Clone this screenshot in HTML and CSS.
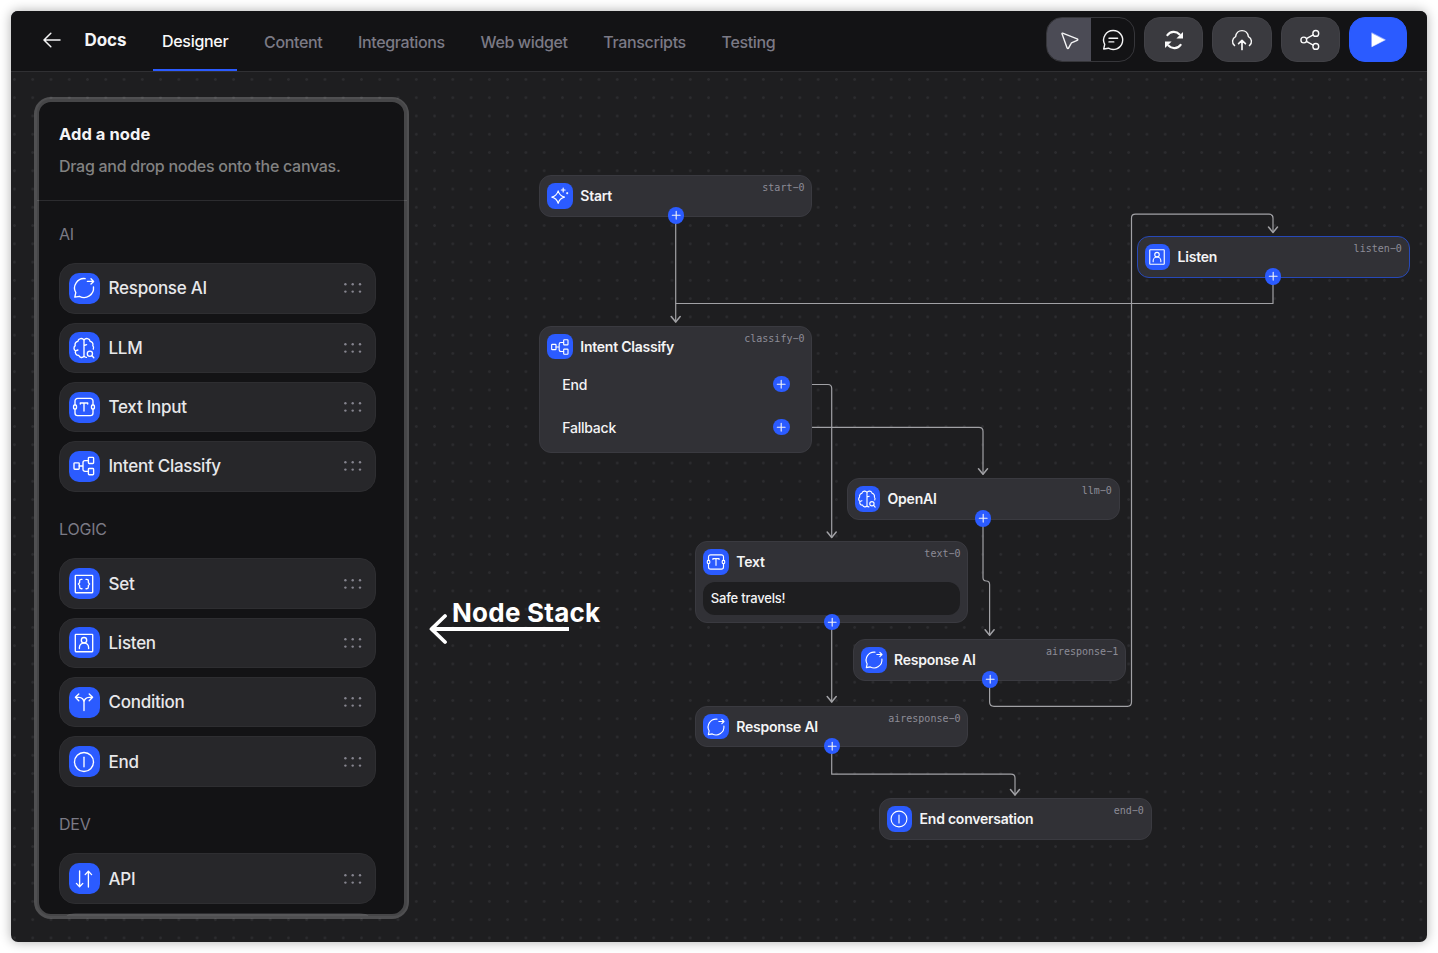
FILE: index.html
```html
<!DOCTYPE html>
<html lang="en">
<head>
<meta charset="utf-8">
<title>Docs – Designer</title>
<link rel="stylesheet" href="styles.css">
</head>
<body>
<svg class="sprite" aria-hidden="true">
  <symbol id="i-response" viewBox="0 0 24 24"><path d="M13.2 2.6A9.5 9.5 0 0 0 3.8 16.7L2.8 21.2L7.5 20.3A9.5 9.5 0 0 0 21.5 11"/><path d="M15.4 5.4h6M19 2.8l2.6 2.6-2.6 2.6"/></symbol>
  <symbol id="i-llm" viewBox="0 0 24 24"><path d="M12 4.300v15.900a2.900 2.900 0 0 1-5.200-.8 3.200 3.200 0 0 1-3.200-4.500 3.200 3.200 0 0 1-.4-5.300 3.300 3.300 0 0 1 2.600-4.300A3.300 3.300 0 0 1 12 4.300a3.300 3.300 0 0 1 6.200 1A3.300 3.300 0 0 1 20.800 9.600a3.200 3.200 0 0 1 .5 3.500M12 20.200a2.800 2.800 0 0 0 2.400 1.200M3.600 14.900l2.300-.9M12 9.500l2.600-.8"/><circle cx="17.900" cy="17.700" r="2.600"/><path d="M20 19.700l1.800 2"/></symbol>
  <symbol id="i-text" viewBox="0 0 24 24"><path d="M3 9.800V6a2.600 2.600 0 0 1 2.600-2.600h12.800A2.600 2.600 0 0 1 21 6v3.800M21 14.200V18a2.600 2.600 0 0 1-2.600 2.600H5.600A2.600 2.600 0 0 1 3 18v-3.800"/><rect x="1.600" y="10" width="2.900" height="4" rx="1"/><rect x="19.500" y="10" width="2.900" height="4" rx="1"/><path d="M8.300 9V8h7.400v1M12 8v8"/></symbol>
  <symbol id="i-classify" viewBox="0 0 24 24"><rect x="2" y="8.800" width="5.200" height="6.400" rx=".8"/><rect x="16.400" y="3.300" width="5.200" height="6.200" rx=".8"/><rect x="16.400" y="14.500" width="5.200" height="6.200" rx=".8"/><path d="M7.200 12H11M16.400 6.600H13A2 2 0 0 0 11 8.600v6.800a2 2 0 0 0 2 2h3.400"/></symbol>
  <symbol id="i-set" viewBox="0 0 24 24"><rect x="3.300" y="3.300" width="17.400" height="17.400" rx=".6"/><path d="M10 7.300H9.300A1.700 1.700 0 0 0 7.600 9v1.600L6.400 12l1.200 1.400V15a1.700 1.700 0 0 0 1.700 1.700H10M14 7.300h.7A1.700 1.700 0 0 1 16.400 9v1.600l1.200 1.400-1.200 1.400V15a1.700 1.700 0 0 1-1.700 1.700H14"/></symbol>
  <symbol id="i-listen" viewBox="0 0 24 24"><rect x="3.300" y="3.300" width="17.400" height="17.400" rx=".6"/><circle cx="12" cy="9.200" r="2.700"/><path d="M7.400 17.600v-1a4.600 4.600 0 0 1 9.200 0v1"/></symbol>
  <symbol id="i-condition" viewBox="0 0 24 24"><path d="M12 20.500v-8.200a5 5 0 0 0-5-5H3.600M12 12.300a5 5 0 0 1 5-5h3.400M6.800 3.900L3.400 7.300l3.400 3.400M17.200 3.900l3.400 3.400-3.400 3.400"/></symbol>
  <symbol id="i-end" viewBox="0 0 24 24"><circle cx="12" cy="12" r="9.500"/><path d="M12 7.200v9.600"/></symbol>
  <symbol id="i-api" viewBox="0 0 24 24"><path d="M7.600 4v15.600M4.400 16.400l3.200 3.300 3.200-3.300M16.400 20V4.400M13.200 7.600l3.200-3.300 3.200 3.300"/></symbol>
  <symbol id="i-start" viewBox="0 0 24 24"><path d="M9.800 5.800Q11.400 11.700 17.400 13.300Q11.400 14.900 9.800 20.800Q8.200 14.900 2.200 13.300Q8.200 11.700 9.800 5.800Z"/><path d="M15.800 2.500v4.600M13.500 4.800h4.600M20.600 7.800v1.400M19.900 8.500h1.400"/></symbol>
  <symbol id="i-grip" viewBox="0 0 18 10"><circle cx="1.400" cy="1.200" r="1.200"/><circle cx="8.700" cy="1.200" r="1.200"/><circle cx="16" cy="1.200" r="1.200"/><circle cx="1.400" cy="8.600" r="1.200"/><circle cx="8.700" cy="8.600" r="1.200"/><circle cx="16" cy="8.600" r="1.200"/></symbol>
  <symbol id="i-plus" viewBox="0 0 16 16"><path d="M8 4.200v7.600M4.200 8h7.600"/></symbol>
</svg>

<div class="window">
  <header class="topbar">
    <svg class="back" viewBox="0 0 18 16"><path d="M17 8H1.200M7.800 1.200L1 8l6.800 6.800"/></svg>
    <h1 class="brand">Docs</h1>
    <nav class="tabs">
      <a class="tab active"><span>Designer</span></a>
      <a class="tab"><span>Content</span></a>
      <a class="tab"><span>Integrations</span></a>
      <a class="tab"><span>Web widget</span></a>
      <a class="tab"><span>Transcripts</span></a>
      <a class="tab"><span>Testing</span></a>
    </nav>
    <div class="actions">
      <div class="toggle">
        <span class="half on"><svg class="ico" viewBox="0 0 24 24"><path d="M4.600 5.100l14.600 5.700c.8.3.8 1.300 0 1.600l-5.200 2.200c-.5.2-.8.5-1 1l-2.300 4.300c-.4.8-1.500.7-1.700-.2L4 5.700c-.1-.4.2-.7.6-.6z"/></svg></span>
        <span class="half"><svg class="ico" viewBox="0 0 24 24"><path d="M12.200 2.500a9.500 9.500 0 1 1-4.800 17.700L2.700 21l1-4.600A9.500 9.500 0 0 1 12.200 2.500z"/><path d="M8 10.300h8.600M8 13.900h4.800"/></svg></span>
      </div>
      <button class="btn"><svg class="ico bold" viewBox="0 0 24 24"><path d="M5.400 7.200C8.400 3 14.200 2.800 17.600 6.400M18.600 16.800C15.600 21 9.800 21.200 6.400 17.600"/><path class="solid" d="M21 4v6.400h-6.600zM3 20v-6.400h6.600z"/></svg></button>
      <button class="btn"><svg class="ico" viewBox="0 0 24 24"><path d="M4.600 17.600A5.300 5.300 0 0 1 5.600 8.600C6.200 4.800 9 2.600 12 2.600s5.800 2.200 6.400 6a5.300 5.300 0 0 1 1 9"/><path class="mid" d="M12 21.500v-8.600M8.600 15.600l3.400-3.200 3.400 3.200"/></svg></button>
      <button class="btn"><svg class="ico" viewBox="0 0 24 24"><circle cx="5.800" cy="12" r="2.900"/><circle cx="17.800" cy="5.400" r="2.900"/><circle cx="17.800" cy="18.400" r="2.900"/><path d="M8.400 10.600l6.800-3.800M8.400 13.400l6.800 3.700"/></svg></button>
      <button class="btn play"><svg class="ico" viewBox="0 0 24 24"><path d="M5.800 5.200v13.600L19 12z"/></svg></button>
    </div>
  </header>

  <main class="canvas">
    <svg class="edges" viewBox="11 72 1416 870">
      <path d="M675.700 216V322"/>
      <path d="M1273 277V303.500H676"/>
      <path d="M811 384.500H828Q831.700 384.500 831.700 388.500V537"/>
      <path d="M811 427.300H979Q983 427.300 983 431.300V474"/>
      <path d="M983 519V577.500Q983 581 986.300 581Q989.600 581 989.600 584.500V635"/>
      <path d="M989.600 680V702Q989.600 706.300 994 706.300H1127.500Q1131.500 706.300 1131.500 702V218Q1131.500 214.200 1135.500 214.200H1269Q1273 214.200 1273 218V232"/>
      <path d="M831.700 622V702"/>
      <path d="M831.700 746V774.200H1011Q1015 774.200 1015 778V795"/>
      <path class="head" d="M671.200 316.500l4.500 5.500 4.500-5.500M827.200 532l4.500 5.500 4.500-5.500M978.500 468.800l4.500 5.500 4.500-5.500M985.100 629.800l4.500 5.500 4.500-5.500M1268.500 227l4.500 5.500 4.500-5.500M827.200 696.500l4.500 5.500 4.500-5.500M1010.500 789.500l4.500 5.500 4.500-5.500"/>
    </svg>

    <article class="node n-start"><div class="node-head"><span class="chip"><svg><use href="#i-start"/></svg></span><b>Start</b><code>start−0</code></div><span class="port out"><svg><use href="#i-plus"/></svg></span></article>

    <article class="node n-classify"><div class="node-head"><span class="chip"><svg><use href="#i-classify"/></svg></span><b>Intent Classify</b><code>classify−0</code></div>
      <div class="branches">
        <div class="branch"><span>End</span><span class="port"><svg><use href="#i-plus"/></svg></span></div>
        <div class="branch"><span>Fallback</span><span class="port"><svg><use href="#i-plus"/></svg></span></div>
      </div>
    </article>

    <article class="node n-listen selected"><div class="node-head"><span class="chip"><svg><use href="#i-listen"/></svg></span><b>Listen</b><code>listen−0</code></div><span class="port out"><svg><use href="#i-plus"/></svg></span></article>
    <article class="node n-openai"><div class="node-head"><span class="chip"><svg><use href="#i-llm"/></svg></span><b>OpenAI</b><code>llm−0</code></div><span class="port out"><svg><use href="#i-plus"/></svg></span></article>
    <article class="node n-text"><div class="node-head"><span class="chip"><svg><use href="#i-text"/></svg></span><b>Text</b><code>text−0</code></div><div class="message">Safe travels!</div><span class="port out"><svg><use href="#i-plus"/></svg></span></article>
    <article class="node n-response1"><div class="node-head"><span class="chip"><svg><use href="#i-response"/></svg></span><b>Response AI</b><code>airesponse−1</code></div><span class="port out"><svg><use href="#i-plus"/></svg></span></article>
    <article class="node n-response0"><div class="node-head"><span class="chip"><svg><use href="#i-response"/></svg></span><b>Response AI</b><code>airesponse−0</code></div><span class="port out"><svg><use href="#i-plus"/></svg></span></article>
    <article class="node n-end"><div class="node-head"><span class="chip"><svg><use href="#i-end"/></svg></span><b>End conversation</b><code>end−0</code></div></article>

    <aside class="panel">
      <div class="panel-head"><h2>Add a node</h2><p>Drag and drop nodes onto the canvas.</p></div>
      <section class="group">
        <h3>AI</h3>
        <div class="row"><span class="chip"><svg><use href="#i-response"/></svg></span><span>Response AI</span><svg class="grip"><use href="#i-grip"/></svg></div>
        <div class="row"><span class="chip"><svg><use href="#i-llm"/></svg></span><span>LLM</span><svg class="grip"><use href="#i-grip"/></svg></div>
        <div class="row"><span class="chip"><svg><use href="#i-text"/></svg></span><span>Text Input</span><svg class="grip"><use href="#i-grip"/></svg></div>
        <div class="row"><span class="chip"><svg><use href="#i-classify"/></svg></span><span>Intent Classify</span><svg class="grip"><use href="#i-grip"/></svg></div>
      </section>
      <section class="group">
        <h3>LOGIC</h3>
        <div class="row"><span class="chip"><svg><use href="#i-set"/></svg></span><span>Set</span><svg class="grip"><use href="#i-grip"/></svg></div>
        <div class="row"><span class="chip"><svg><use href="#i-listen"/></svg></span><span>Listen</span><svg class="grip"><use href="#i-grip"/></svg></div>
        <div class="row"><span class="chip"><svg><use href="#i-condition"/></svg></span><span>Condition</span><svg class="grip"><use href="#i-grip"/></svg></div>
        <div class="row"><span class="chip"><svg><use href="#i-end"/></svg></span><span>End</span><svg class="grip"><use href="#i-grip"/></svg></div>
      </section>
      <section class="group">
        <h3>DEV</h3>
        <div class="row"><span class="chip"><svg><use href="#i-api"/></svg></span><span>API</span><svg class="grip"><use href="#i-grip"/></svg></div>
        <div class="row"></div>
      </section>
    </aside>
    <div class="ring"></div>

    <div class="callout">
      <span>Node Stack</span>
      <svg viewBox="0 0 140 32"><path class="shaft" d="M3 16H140"/><path d="M16 3L2.500 16l13.500 13"/></svg>
    </div>
  </main>
</div>
</body>
</html>
```
FILE: styles.css
```css
* { box-sizing: border-box; }
body {
  margin: 0;
  padding: 11px;
  height: 953px;
  overflow: hidden;
  background: #fff;
  color: #f4f4f5;
  font-family: Inter, "Liberation Sans", sans-serif;
}
h1, h2, h3, p { margin: 0; }
svg { display: block; fill: none; stroke: currentColor; stroke-linecap: round; stroke-linejoin: round; }
.sprite { position: absolute; width: 0; height: 0; }

.window {
  width: 1416px;
  height: 931px;
  display: flex;
  flex-direction: column;
  overflow: hidden;
  border-radius: 7px;
  background: #1e1e20;
  box-shadow: 0 0 12px rgba(0, 0, 0, .32);
}

/* Top bar */
.topbar {
  flex: none;
  height: 61px;
  display: flex;
  align-items: stretch;
  padding: 0 20px 0 32px;
  background: #131315;
  border-bottom: 1px solid #303033;
}
.back { width: 18px; height: 16px; margin: 21px 23.500px 0 0; stroke-width: 1.500; }
.brand { width: 68.500px; margin-top: 18px; font-size: 17px; line-height: 22px; font-weight: 700; letter-spacing: -.1px; }
.tabs { display: flex; gap: 17.700px; }
.tab { padding: 20px 9px 0; font-size: 16px; line-height: 22px; font-weight: 450; letter-spacing: -.36px; color: #7b7a85; white-space: nowrap; }
.tab.active { padding-top: 19px; font-weight: 500; letter-spacing: -.3px; color: #fafafa; border-bottom: 2px solid #2b5bff; }
.actions { display: flex; gap: 9px; margin-left: auto; padding-top: 6px; }
.toggle { width: 89px; height: 45px; display: flex; overflow: hidden; border: 1px solid #36363a; border-radius: 16px; }
.half { width: 44px; display: grid; place-items: center; }
.half.on { background: #4b4b55; }
.half .ico { position: relative; left: 1px; }
.btn { width: 59.300px; height: 45px; display: grid; place-items: center; padding: 0; border: 1px solid #414146; border-radius: 16px; background: #3a3a3f; color: #fafafa; }
.btn.play { width: 58px; border-color: #2b5bff; background: #2b5bff; }
.ico { width: 24px; height: 24px; stroke-width: 1.400; }
.bold { stroke-width: 2.200; }
.mid { stroke-width: 1.700; }
.solid { fill: currentColor; stroke: none; }
.play .ico { fill: #fff; stroke-width: .5; }

/* Canvas */
.canvas {
  position: relative;
  flex: 1;
  background-image: radial-gradient(circle, #2c2c2f 0, #2c2c2f 1px, transparent 1.700px);
  background-size: 18.280px 18.280px;
  background-position: -5.700px -1.700px;
}
.edges { position: absolute; inset: 0; width: 1416px; height: 870px; stroke: #a1a1a5; stroke-width: 1.200; }
.head { stroke-width: 1.500; }

.node {
  position: absolute;
  width: 273px;
  height: 41.500px;
  padding: 7px 7px 0;
  border: 1px solid #3a3a40;
  border-radius: 12px;
  background: #313136;
}
.node-head { display: flex; align-items: center; height: 26px; }
.node b { margin-left: 7.500px; font-size: 14px; line-height: 20px; font-weight: 600; letter-spacing: -.24px; white-space: nowrap; }
.node code { align-self: flex-start; margin: -1px -.2px 0 auto; font: 10px/12px "DejaVu Sans Mono", monospace; color: #8d8c96; }
.chip { flex: none; display: grid; place-items: center; border-radius: 8px; background: #2b5bff; width: 25.500px; height: 25.500px; color: #fff; }
.chip svg { width: 20px; height: 20px; stroke-width: 1.350; }
.port { width: 16.400px; height: 16.400px; border-radius: 50%; background: #2b5bff; }
.port svg { width: 16.400px; height: 16.400px; stroke-width: 1.100; }
.out { position: absolute; left: 127.500px; bottom: -8.200px; }
.selected { border-color: #2749b8; }

.n-start { left: 528.300px; top: 103px; }
.n-classify { left: 528.300px; top: 253.500px; height: 127.500px; }
.n-listen { left: 1125.600px; top: 164px; }
.n-openai { left: 835.600px; top: 406px; }
.n-text { left: 684.300px; top: 469px; height: 82px; }
.n-response1 { left: 842px; top: 567px; }
.n-response0 { left: 684.300px; top: 633.500px; }
.n-end { left: 867.600px; top: 726px; }

.branches { display: grid; gap: 23px; padding: 14.500px 14.500px 0 15px; }
.branch { display: flex; justify-content: space-between; align-items: center; height: 20px; font-size: 14px; font-weight: 500; letter-spacing: -.24px; }
.message { height: 33px; margin-top: 7px; padding: 0 7.500px; border-radius: 12px; background: #1e1e20; font-size: 13px; line-height: 33px; font-weight: 500; letter-spacing: -.2px; }

/* Node list */
.panel {
  position: absolute;
  left: 25.500px;
  top: 27px;
  width: 370px;
  height: 817px;
  overflow: hidden;
  border-radius: 14px;
  background: #131315;
}
.panel-head { height: 102px; padding: 24px 22.500px 0; border-bottom: 1px solid #2c2c2f; }
.panel-head h2 { font-size: 16.500px; line-height: 22px; font-weight: 700; letter-spacing: .05px; white-space: nowrap; }
.panel-head p { margin-top: 11px; font-size: 16px; line-height: 21px; font-weight: 450; letter-spacing: -.28px; color: #828282; white-space: nowrap; }
.group { display: grid; gap: 9px; width: 317px; margin: 22.100px 0 0 22.500px; }
.group + .group { margin-top: 26.500px; }
.group h3 { margin-bottom: 9.200px; font-size: 16px; line-height: 22px; font-weight: 400; letter-spacing: -.2px; color: #7b7a85; }
.row { display: flex; align-items: center; height: 50.350px; padding: 0 13px 0 8.500px; border: 1px solid #2e2e31; border-radius: 16px; background: #27272a; font-size: 17px; font-weight: 480; letter-spacing: -.26px; color: #e8e8ea; }
.row .chip { width: 31px; height: 31px; margin-right: 9px; border-radius: 10px; }
.row .chip svg { width: 24px; height: 24px; }
.grip { width: 18px; height: 10px; margin-left: auto; fill: #85848e; stroke: none; }
.ring { position: absolute; left: 23px; top: 25px; width: 375px; height: 821.500px; border: 5px solid rgba(255, 255, 255, .22); border-radius: 17px; }

.callout { position: absolute; left: 418px; top: 525px; display: grid; color: #fff; }
.callout span { margin-left: 23px; font-size: 26px; line-height: 32px; font-weight: 700; letter-spacing: .25px; white-space: nowrap; }
.callout svg { width: 140px; height: 32px; margin-top: -16px; stroke-width: 3.800; }
.callout .shaft { stroke-linecap: butt; }
```
